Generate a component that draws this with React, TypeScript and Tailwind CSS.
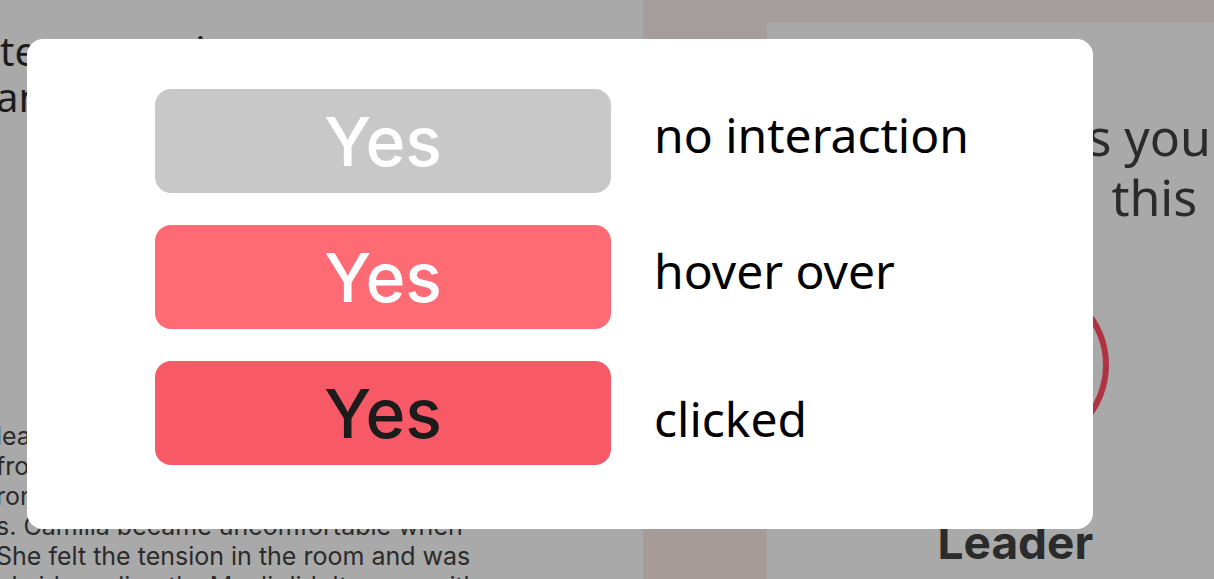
const choices = [
  { id: 'idle', label: 'no interaction', button: 'bg-[#c8c8c8] text-white', note: 'pb-3' },
  { id: 'hover', label: 'hover over', button: 'bg-[#ff6b75] text-white', note: 'pb-3' },
  { id: 'clicked', label: 'clicked', button: 'bg-[#f75966] text-[#1c1c1c]', note: 'pt-3' },
];

function Backdrop() {
  return (
    <div className="flex h-screen overflow-hidden text-[#2b2b2b]">
      <section className="flex w-[53%] shrink-0 flex-col justify-between bg-[#a9a9a9] whitespace-nowrap">
        <div className="-ml-1 flex pt-7 font-['Noto_Sans',sans-serif] text-[40px] leading-[46px] text-[#1c1c1c]">
          <p>
            <span className="pl-1">te</span><br />an
          </p>
          <p className="pl-[152px]">i</p>
        </div>
        <p className="-ml-1 h-[158px] overflow-hidden font-['Inter',sans-serif] text-[25px] leading-[30px]">
          lea<br />fro<br />ron<br />s. Camilla became uncomfortable when<br />
          She felt the tension in the room and was<br />n's ideas directly. Manli didn't agree with
        </p>
      </section>
      <section className="flex flex-1 bg-linear-to-b from-[#a49d9b] to-[#a69b98] pt-[22px] pl-[124px]">
        <div className="flex flex-1 flex-col bg-[#a9a9a9]">
          <p className="pt-[85px] pl-80 font-['Noto_Sans',sans-serif] text-[50px] leading-[60px] whitespace-nowrap">
            s you<br /><span className="pl-6">this</span>
          </p>
          <div className="flex w-[496px] flex-col items-center pt-[52px]">
            <svg className="ml-4 size-[172px]" viewBox="0 0 172 172" aria-hidden="true">
              <circle cx="86" cy="86" r="83" fill="none" stroke="#af3342" strokeWidth="6" />
            </svg>
            <h2 className="pt-[66px] font-['Inter',sans-serif] text-[46px] leading-[50px] font-bold">Leader</h2>
          </div>
        </div>
      </section>
    </div>
  );
}

export default function App() {
  return (
    <main className="relative min-h-screen overflow-hidden">
      <Backdrop />
      <div role="dialog" aria-label="Yes" className="absolute top-[39px] right-[121px] left-[27px] flex flex-col gap-8 rounded-2xl bg-white pt-[50px] pb-16 pl-32">
        {choices.map((c) => (
          <div key={c.id} className="flex items-center">
            <button type="button" aria-describedby={c.id} className={`h-[104px] w-[456px] rounded-2xl font-['Inter',sans-serif] text-[68px] leading-[80px] font-medium ${c.button}`}>
              Yes
            </button>
            <p id={c.id} className={`pl-[43px] font-['Noto_Sans',sans-serif] text-[48px] leading-[64px] text-black ${c.note}`}>{c.label}</p>
          </div>
        ))}
      </div>
    </main>
  );
}
